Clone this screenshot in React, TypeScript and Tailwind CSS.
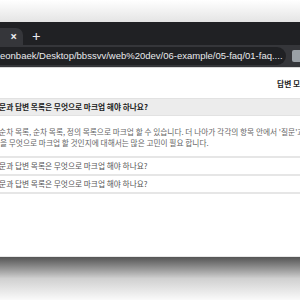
import { Star } from "lucide-react";

const ko = { fontFamily: '"Noto Sans CJK KR", "Noto Sans", sans-serif' };

const App = () => {
    return (
        <div className="w-[300px] h-[300px] overflow-hidden bg-white flex flex-col">
            {/* shadow above the window */}
            <div className="h-[22px] bg-gradient-to-b from-white to-[#e4e4e4]" />

            {/* tab strip */}
            <div className="h-[23px] bg-[#202124] flex items-end text-[#e8eaed]">
                <div className="w-[23px] h-[17px] bg-[#35363a] rounded-tr-[7px] flex items-center justify-end pr-[6px] text-[12px] font-bold leading-none">
                    ×
                </div>
                <div className="ml-[9px] h-[17px] flex items-center text-[15px] leading-none">+</div>
            </div>

            {/* address row */}
            <div className="h-[22px] bg-[#35363a] flex items-center">
                <div
                    className="h-[18px] w-[287px] bg-[#202124] rounded-r-full flex items-center overflow-hidden"
                    style={{ fontFamily: '"Liberation Sans", Arial, sans-serif' }}
                >
                    <span className="text-[9.5px] text-[#e8eaed] whitespace-nowrap leading-none">
                        eonbaek/Desktop/bbssvv/web%20dev/06-example/05-faq/01-faq....
                    </span>
                    <Star className="ml-auto mr-[5px] text-[#e8eaed]" size={10} strokeWidth={2} />
                </div>
                <div className="ml-[6px] w-[8px] h-[12px] bg-[#9aa0a6] rounded-l-[2px]" />
            </div>

            {/* page */}
            <div className="h-[189px] bg-white border-t border-[#d8d8d8] overflow-hidden text-[7.7px]" style={ko}>
                <div className="flex justify-end pt-[10px] h-[30px]">
                    <span className="font-bold text-[#222] whitespace-nowrap -mr-[23px]">답변 모두 보기</span>
                </div>
                <div className="h-[18px] bg-[#ececec] border-y border-[#e2e2e2] flex items-center -ml-[8px]">
                    <span className="font-bold text-[#222] whitespace-nowrap">질문과 답변 목록은 무엇으로 마크업 해야 하나요?</span>
                </div>
                <div className="pt-[11px] pb-[8px] text-[#666] leading-[10.5px] whitespace-nowrap">
                    <div className="-ml-[8px]">비순차 목록, 순차 목록, 정의 목록으로 마크업 할 수 있습니다. 더 나아가 각각의 항목 안에서 '질문'과 '답변'</div>
                    <div>을 무엇으로 마크업 할 것인지에 대해서는 많은 고민이 필요 합니다.</div>
                </div>
                <div className="border-t-2 border-[#e6e6e6]">
                    <div className="h-[18px] flex items-center -ml-[8px] text-[#555] border-b-2 border-[#e6e6e6]">
                        질문과 답변 목록은 무엇으로 마크업 해야 하나요?
                    </div>
                    <div className="h-[18px] flex items-center -ml-[8px] text-[#555] border-b-2 border-[#e6e6e6]">
                        질문과 답변 목록은 무엇으로 마크업 해야 하나요?
                    </div>
                </div>
            </div>

            {/* shadow below the window */}
            <div className="flex-1 border-t border-[#e8e8e8] bg-gradient-to-b from-[#555] via-[#d0d0d0] to-[#fafafa]" />
        </div>
    );
};

export default App;
